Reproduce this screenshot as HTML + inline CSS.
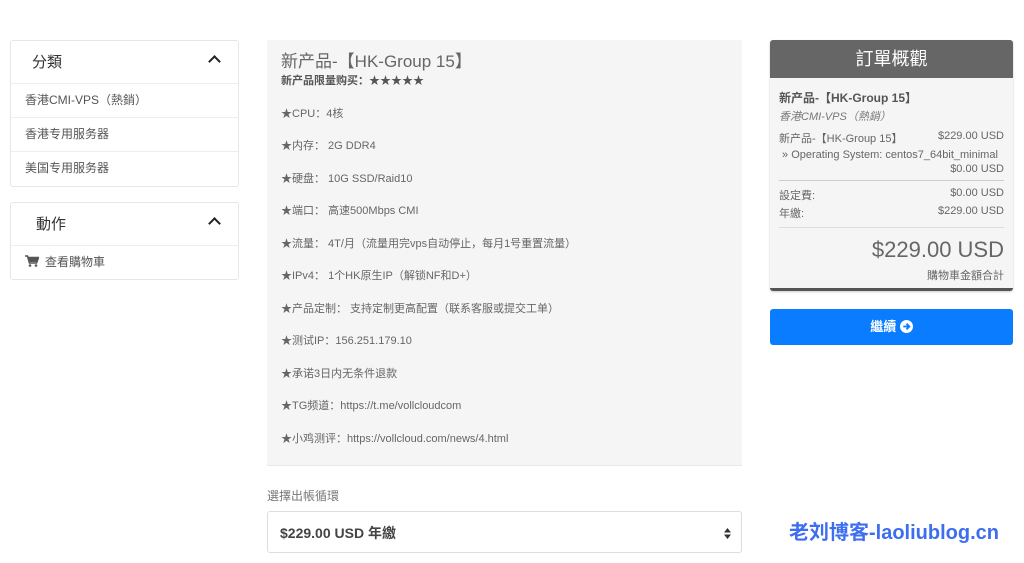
<!DOCTYPE html>
<html><head><meta charset="utf-8"><style>
*{margin:0;padding:0;box-sizing:border-box}
body{width:1024px;height:563px;background:#fff;font-family:"Liberation Sans","Noto Sans CJK SC",sans-serif;position:relative;overflow:hidden;color:#555}
.a{position:absolute;white-space:nowrap}
.panel{position:absolute;left:10px;width:229px;border:1px solid #e6e6e6;border-radius:3px;background:#fff}
.ph{height:43px;border-bottom:1px solid #eee;position:relative;font-size:15px;color:#333}
.pi{height:34px;border-bottom:1px solid #eee;font-size:12px;color:#555;line-height:33px;padding-left:14px}
.pi:last-child{border-bottom:none}
.chev{position:absolute;right:19px;top:16px;width:9px;height:9px;border-left:2.5px solid #222;border-top:2.5px solid #222;transform:rotate(45deg)}
.c{position:absolute;left:267px;top:40px;width:475px;height:426px;background:#f5f5f5;border-bottom:1px solid #e8e8e8}
.ln{position:absolute;left:14px;font-size:11px;color:#666;white-space:nowrap}
.r{display:flex;justify-content:space-between;font-size:11px;color:#666}
</style></head><body>
<div class="panel" style="top:40px;height:147px">
 <div class="ph"><span class="a" style="left:21px;top:10px">分類</span><span class="chev"></span></div>
 <div class="pi">香港CMI-VPS（熱銷）</div>
 <div class="pi">香港专用服务器</div>
 <div class="pi">美国专用服务器</div>
</div>
<div class="panel" style="top:202px;height:78px">
 <div class="ph"><span class="a" style="left:25px;top:10px">動作</span><span class="chev"></span></div>
 <div class="pi"><svg width="14" height="12" viewBox="0 0 14 12" style="vertical-align:-1px;margin-right:6px"><path d="M0 1h2.5l2 7h7l2-5.5H3.5" fill="none" stroke="#555" stroke-width="1.6"/><rect x="4" y="3" width="8.5" height="4" fill="#555"/><circle cx="5" cy="10.5" r="1.3" fill="#555"/><circle cx="11" cy="10.5" r="1.3" fill="#555"/></svg>查看購物車</div>
</div>
<div class="c">
 <div class="ln" style="top:7px;font-size:17px;color:#666">新产品-【HK-Group 15】</div>
 <div class="ln" style="top:32px;font-weight:bold;color:#555">新产品限量购买：★★★★★</div>
 <div class="ln" style="top:65px">★CPU：4核</div>
 <div class="ln" style="top:97px">★内存： 2G DDR4</div>
 <div class="ln" style="top:130px">★硬盘： 10G SSD/Raid10</div>
 <div class="ln" style="top:162px">★端口： 高速500Mbps CMI</div>
 <div class="ln" style="top:195px">★流量： 4T/月（流量用完vps自动停止，每月1号重置流量）</div>
 <div class="ln" style="top:227px">★IPv4： 1个HK原生IP（解锁NF和D+）</div>
 <div class="ln" style="top:260px">★产品定制： 支持定制更高配置（联系客服或提交工单）</div>
 <div class="ln" style="top:292px">★测试IP：156.251.179.10</div>
 <div class="ln" style="top:325px">★承诺3日内无条件退款</div>
 <div class="ln" style="top:357px">★TG频道：https://t.me/vollcloudcom</div>
 <div class="ln" style="top:390px">★小鸡测评：https://vollcloud.com/news/4.html</div>
</div>
<div class="a" style="left:267px;top:487px;font-size:12px;color:#777">選擇出帳循環</div>
<div class="a" style="left:267px;top:511px;width:475px;height:42px;border:1px solid #ddd;border-radius:3px;font-size:14px;font-weight:bold;color:#444;padding:11px 0 0 12px">$229.00 USD 年繳
 <svg class="a" style="right:10px;top:16px" width="7" height="11" viewBox="0 0 7 11"><path d="M0 4.5L3.5 0 7 4.5zM0 6.5L3.5 11 7 6.5z" fill="#333"/></svg></div>
<div class="a" style="left:770px;top:40px;width:243px;height:251px;background:#f5f5f5;border-radius:3px;border-bottom:3px solid #555;box-shadow:0 1px 2px rgba(0,0,0,.2)">
 <div style="height:38px;background:#666;color:#fff;font-size:18px;text-align:center;line-height:38px;border-radius:3px 3px 0 0">訂單概觀</div>
 <div style="padding:11px 9px 0 9px">
  <div style="font-size:12px;font-weight:bold;color:#555">新产品-【HK-Group 15】</div>
  <div style="font-size:11px;font-style:italic;color:#777;margin-top:2px">香港CMI-VPS（熱銷）</div>
  <div class="r" style="margin-top:6px"><span>新产品-【HK-Group 15】</span><span>$229.00 USD</span></div>
  <div class="r" style="margin-top:3px"><span>&nbsp;» Operating System: centos7_64bit_minimal</span></div>
  <div class="r" style="margin-top:2px;justify-content:flex-end"><span>$0.00 USD</span></div>
  <div style="border-top:1px solid #ccc;margin-top:5px"></div>
  <div class="r" style="margin-top:6px"><span>設定費:</span><span>$0.00 USD</span></div>
  <div class="r" style="margin-top:2px"><span>年繳:</span><span>$229.00 USD</span></div>
  <div style="border-top:1px solid #ddd;margin-top:6px"></div>
  <div style="text-align:right;font-size:22px;color:#666;margin-top:9px">$229.00 USD</div>
  <div style="text-align:right;font-size:11px;color:#666;margin-top:4px">購物車金額合計</div>
 </div>
</div>
<div class="a" style="left:770px;top:309px;width:243px;height:36px;background:#0a7cff;border-radius:3px;color:#fff;font-size:13px;font-weight:bold;text-align:center;line-height:36px">繼續 <svg width="13" height="13" viewBox="0 0 14 14" style="vertical-align:-2px"><circle cx="7" cy="7" r="7" fill="#fff"/><path d="M3.5 7h6M7 4l3 3-3 3" stroke="#0a7cff" stroke-width="2" fill="none"/></svg></div>
<div class="a" style="left:789px;top:516px;font-size:20px;font-weight:bold;color:#3d6df0">老刘博客-laoliublog.cn</div>
</body></html>
